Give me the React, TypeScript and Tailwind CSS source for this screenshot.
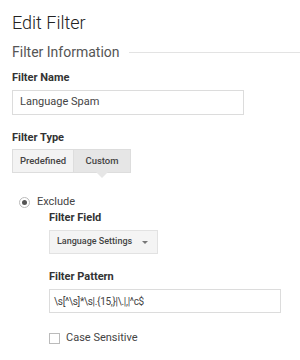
const font = { fontFamily: "Roboto, 'Liberation Sans', sans-serif" };

export default function App() {
  return (
    <div className="h-[360px] w-[300px] overflow-hidden bg-white pl-3 text-[#333]" style={font}>
      <h1 className="pt-[11px] text-[18px] font-light leading-6 text-[#222]">Edit Filter</h1>

      <div className="mt-[7px] flex h-5 items-center gap-[9px]">
        <span className="text-[14px] text-[#555]">Filter Information</span>
        <div className="h-px flex-1 bg-[#e3e3e3]" />
      </div>

      <p className="mt-[8px] text-[11px] font-bold leading-4 text-[#333]">Filter Name</p>
      <div className="mt-[4px] flex h-[25px] w-[232px] items-center border border-[#dcdcdc] px-[7px] text-[11px] text-[#444]">
        Language Spam
      </div>

      <p className="mt-[15px] text-[11px] font-bold leading-4 text-[#333]">Filter Type</p>
      <div className="mt-[3px] flex h-[24px] w-[119px] border border-[#ddd] text-[9.5px] font-medium text-[#444]">
        <div className="flex w-[60px] items-center justify-center bg-[#f3f3f3]">Predefined</div>
        <div className="relative flex flex-1 items-center justify-center border-l border-[#ddd] bg-[#e6e6e6]">
          Custom
          <div className="absolute left-1/2 top-full h-0 w-0 -translate-x-1/2 border-x-[6px] border-t-[6px] border-x-transparent border-t-[#e6e6e6]" />
        </div>
      </div>

      <div className="mt-[21px] flex h-4 items-center gap-[7px] pl-[7px]">
        <div className="flex h-[11px] w-[11px] items-center justify-center rounded-full border border-[#bbb] bg-white">
          <div className="h-[5px] w-[5px] rounded-full bg-[#555]" />
        </div>
        <span className="text-[11px] text-[#444]">Exclude</span>
      </div>

      <div className="pl-[37px]">
        <p className="text-[11px] font-bold leading-4 text-[#333]">Filter Field</p>
        <div className="mt-[4px] flex h-[24px] w-[109px] items-center justify-between border border-[#e2e2e2] bg-[#f4f4f4] pl-[7px] pr-[9px] text-[9px] font-medium text-[#444]">
          Language Settings
          <div className="h-0 w-0 border-x-[3px] border-t-[3px] border-x-transparent border-t-[#777]" />
        </div>

        <p className="mt-[15px] text-[11px] font-bold leading-4 text-[#333]">Filter Pattern</p>
        <div className="mt-[4px] flex h-[24px] w-[232px] items-center border border-[#dcdcdc] px-[4px] text-[10px] tracking-[-0.3px] text-[#444]">
          {"\\s[^\\s]*\\s|.{15,}|\\.|,|^c$"}
        </div>

        <div className="mt-[17px] flex h-4 items-center gap-[6px]">
          <div className="h-[11px] w-[11px] border border-[#bbb] bg-white" />
          <span className="text-[11px] text-[#444]">Case Sensitive</span>
        </div>
      </div>
    </div>
  );
}
